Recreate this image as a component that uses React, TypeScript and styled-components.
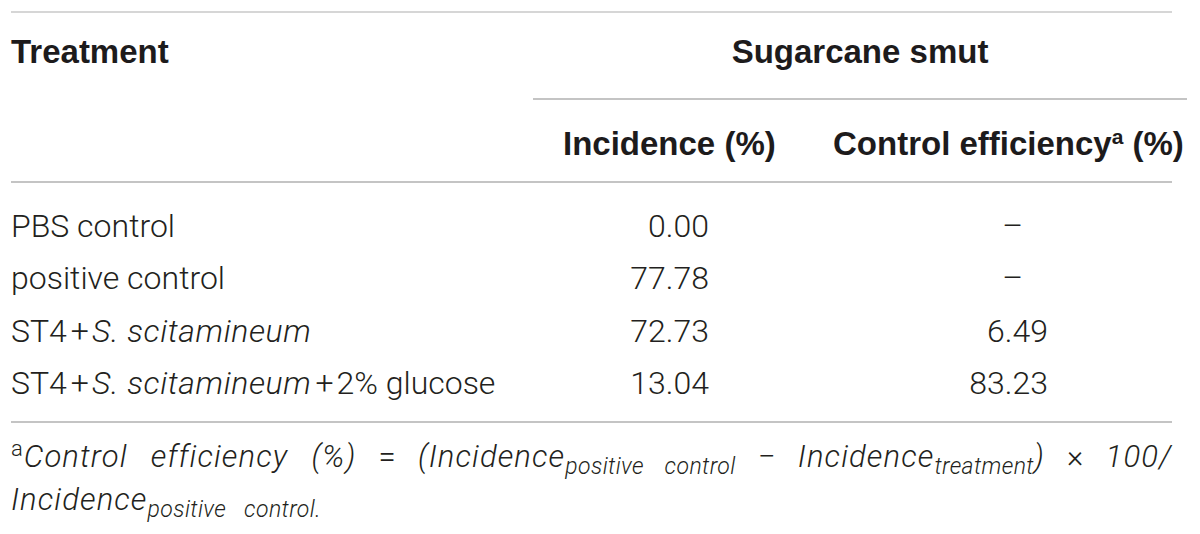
import React from "react";
import styled, { createGlobalStyle } from "styled-components";

const Global = createGlobalStyle`
  html, body { margin: 0; padding: 0; background: #ffffff; }
  body { font-family: "Liberation Sans", Arial, sans-serif; color: #231f20; }
`;

const Page = styled.div`
  padding: 11px 0 0 11px;
  width: 1176px;
`;

const Rule = styled.div<{ $tone?: string }>`
  width: 1161px;
  height: 2px;
  background: ${(p) => p.$tone || "#c4c4c4"};
`;

const Grid = styled.div`
  display: grid;
  grid-template-columns: 522px 267px 387px;
`;

const HeadRow1 = styled(Grid)`
  height: 85px;
`;

const HeadRow2 = styled(Grid)`
  height: 83px;
`;

const HeadCell = styled.div<{ $pt: number; $pl?: number; $span?: boolean; $center?: boolean }>`
  font-family: "Liberation Sans", Arial, sans-serif;
  font-weight: 700;
  font-size: 33px;
  line-height: 40px;
  color: #1d1b1c;
  white-space: nowrap;
  padding-top: ${(p) => p.$pt}px;
  padding-left: ${(p) => p.$pl ?? 0}px;
  ${(p) => (p.$span ? "grid-column: 2 / span 2;" : "")}
  ${(p) => (p.$center ? "text-align: center;" : "")}
`;

const Spanner = styled(HeadCell)`
  border-bottom: 2px solid #c4c4c4;
  box-sizing: border-box;
  height: 87px;
  margin-bottom: -2px;
`;

const Sup = styled.sup`
  font-size: 21px;
  line-height: 0;
  vertical-align: 0;
  position: relative;
  top: -11px;
  font-weight: 700;
  margin-right: 9px;
`;

const Body = styled.div`
  padding: 16.5px 0 11px;
`;

const BodyRow = styled(Grid)`
  height: 52.67px;
`;

const Cell = styled.div<{ $align?: "left" | "right"; $pr?: number }>`
  font-family: Roboto, "Liberation Sans", sans-serif;
  font-weight: 300;
  font-size: 32px;
  line-height: 52.67px;
  color: #231f20;
  white-space: nowrap;
  text-align: ${(p) => p.$align || "left"};
  padding-right: ${(p) => p.$pr ?? 0}px;
`;

const Em = styled.i`
  font-style: italic;
  letter-spacing: 0.6px;
`;

const Plus = styled.span`
  margin: 0 3px 0 4px;
`;

const Foot = styled.p`
  margin: 0;
  width: 1161px;
  padding-top: 14px;
  font-family: Roboto, "Liberation Sans", sans-serif;
  font-weight: 300;
  font-size: 31px;
  line-height: 40px;
  color: #231f20;
  text-align: justify;
`;

const FootEm = styled.i`
  font-style: italic;
  letter-spacing: 1.1px;
`;

const FootSup = styled.span`
  font-size: 22px;
  position: relative;
  top: -11px;
  font-style: normal;
  margin-right: 1px;
`;

const FootSub = styled.span`
  font-size: 23px;
  position: relative;
  top: 7px;
  font-style: italic;
  letter-spacing: 0.4px;
`;

const Op = styled.span`
  font-style: normal;
`;

type Row = { name: React.ReactNode; inc: string; eff: string };

const rows: Row[] = [
  { name: "PBS control", inc: "0.00", eff: "–" },
  { name: "positive control", inc: "77.78", eff: "–" },
  {
    name: (
      <>
        ST4<Plus>+</Plus>
        <Em>S. scitamineum</Em>
      </>
    ),
    inc: "72.73",
    eff: "6.49",
  },
  {
    name: (
      <>
        ST4<Plus>+</Plus>
        <Em>S. scitamineum</Em>
        <Plus>+</Plus>2% glucose
      </>
    ),
    inc: "13.04",
    eff: "83.23",
  },
];

export default function App() {
  return (
    <>
      <Global />
      <Page>
        <Rule $tone="#d6d6d6" />
        <HeadRow1>
          <HeadCell $pt={19}>Treatment</HeadCell>
          <Spanner $pt={19} $span $center>
            Sugarcane smut
          </Spanner>
        </HeadRow1>
        <HeadRow2>
          <div />
          <HeadCell $pt={26} $pl={30}>
            Incidence (%)
          </HeadCell>
          <HeadCell $pt={26} $pl={33}>
            Control efficiency<Sup>a</Sup>(%)
          </HeadCell>
        </HeadRow2>
        <Rule />
        <Body>
          {rows.map((r, i) => (
            <BodyRow key={i}>
              <Cell>{r.name}</Cell>
              <Cell $align="right" $pr={91}>
                {r.inc}
              </Cell>
              <Cell $align="right" $pr={r.eff === "–" ? 164 : 139}>
                {r.eff}
              </Cell>
            </BodyRow>
          ))}
        </Body>
        <Rule />
        <Foot>
          <FootSup>a</FootSup>
          <FootEm>Control efficiency (%)</FootEm> <Op>=</Op>{" "}
          <FootEm>
            (Incidence<FootSub>positive control</FootSub>
          </FootEm>{" "}
          <Op>−</Op>{" "}
          <FootEm>
            Incidence<FootSub>treatment</FootSub>)
          </FootEm>{" "}
          <Op>×</Op> <FootEm>100/</FootEm>{" "}
          <FootEm>
            Incidence<FootSub>positive&nbsp;&nbsp;&nbsp;control.</FootSub>
          </FootEm>
        </Foot>
      </Page>
    </>
  );
}
